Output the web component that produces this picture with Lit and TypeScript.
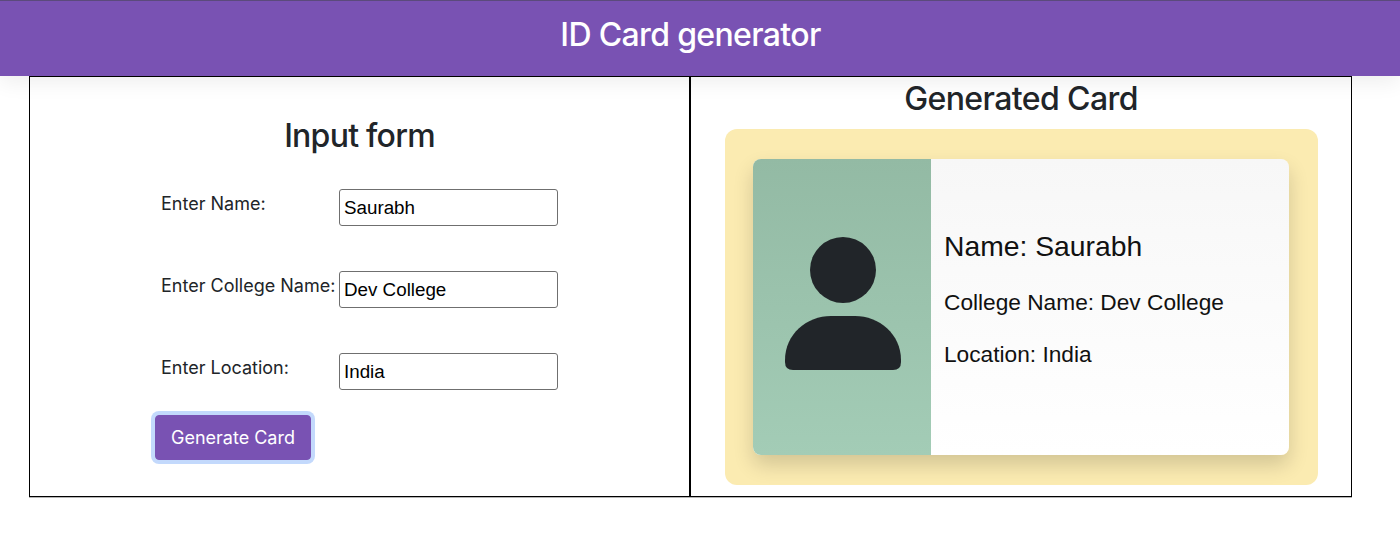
import { LitElement, html, css } from "lit";
import { customElement } from "lit/decorators.js";

@customElement("app-root")
export class AppRoot extends LitElement {
  static styles = css`
    :host { display: block; height: 551px; background: #fff; font-family: Inter, "Liberation Sans", sans-serif; color: #212529; overflow: hidden; }
    .head { position: relative; z-index: 2; height: 76px; box-sizing: border-box; background: #7952b3; border-top: 1px solid #5b4a7c; color: #fff; display: flex; justify-content: center; align-items: center; padding: 0 19px 9px 0; font-size: 32px; font-weight: 500; letter-spacing: -0.65px; box-shadow: 0 6px 20px rgba(0,0,0,.07); }
    .box { display: grid; grid-template-columns: 661px 662px; width: 1323px; height: 421px; margin-left: 29px; border-top: 1px solid #000; border-bottom: 1px solid #000; box-shadow: 0 1px 0 #b5b5b5; box-sizing: border-box; }
    .col { box-sizing: border-box; min-width: 0; }
    .col.left { border-left: 1px solid #000; border-right: 1px solid #000; }
    .col.right { border-left: 1px solid #000; border-right: 1px solid #000; padding-top: 2px; }
    h2 { margin: 0; font-size: 32px; font-weight: 500; letter-spacing: -0.75px; line-height: 38px; text-align: center; }
    .left h2 { margin-top: 40px; margin-bottom: 34px; }
    .right h2 { padding-top: 1px; margin-bottom: -1px; letter-spacing: -0.6px; }
    .form { margin-left: 131px; display: flex; flex-direction: column; gap: 45px; }
    .row { display: flex; height: 37px; font-size: 18px; }
    label { width: 178px; flex: none; line-height: 29px; white-space: nowrap; }
    input { width: 219px; height: 37px; box-sizing: border-box; margin: 0; border: 1px solid #6f6f6f; border-radius: 3px; padding: 0 4px; font: 18.8px "Liberation Sans", Arial, sans-serif; color: #000; background: #fff; }
    button { display: block; margin: 25px 0 0 125px; width: 156px; height: 45px; box-sizing: border-box; background: #7952b3; color: #fff; border: 1px solid #7952b3; border-radius: 4px; font: 18px Inter, "Liberation Sans", sans-serif; padding: 0; box-shadow: 0 0 0 4px #c3d9fc; }
    .yellow { margin: 12px 33px 0 34px; height: 356px; box-sizing: border-box; padding: 30px 29px 30px 28px; background: #fbebb1; border-radius: 12px; overflow: hidden; }
    .card { display: flex; height: 296px; border-radius: 8px; overflow: hidden; background: linear-gradient(#f7f7f7, #fff); }
    .shadow { border-radius: 8px; box-shadow: 0 10px 20px rgba(0,0,0,.16); }
    .photo { width: 178px; flex: none; background: linear-gradient(#93baa4, #a3ccb6); display: flex; align-items: center; justify-content: center; }
    .photo svg { display: block; width: 120px; height: 140px; margin: -3px 0 0 2px; }
    .info { flex: 1; padding: 0 0 0 13px; color: #000; font-family: "Liberation Sans", Arial, sans-serif; display: flex; flex-direction: column; }
    .name { font-size: 28.3px; line-height: 34px; margin-top: 70px; color: #111; }
    .meta { font-size: 22.7px; line-height: 28px; margin-top: 24px; color: #111; }
    .meta.c { margin-top: 25px; }
  `;

  render() {
    return html`
      <div class="head">ID Card generator</div>
      <div class="box">
        <div class="col left">
          <h2>Input form</h2>
          <div class="form">
            <div class="row"><label>Enter Name:</label><input value="Saurabh" /></div>
            <div class="row"><label>Enter College Name:</label><input value="Dev College" /></div>
            <div class="row"><label>Enter Location:</label><input value="India" /></div>
          </div>
          <button>Generate Card</button>
        </div>
        <div class="col right">
          <h2>Generated Card</h2>
          <div class="yellow">
            <div class="shadow">
              <div class="card">
                <div class="photo">
                  <svg viewBox="0 0 120 140" aria-hidden="true">
                    <circle cx="60" cy="34" r="33" fill="#212529" />
                    <path d="M2 124 C2 98 24 80 48 80 H72 C96 80 118 98 118 124 V126 Q118 134 110 134 H10 Q2 134 2 126 Z" fill="#212529" />
                  </svg>
                </div>
                <div class="info">
                  <div class="name">Name: Saurabh</div>
                  <div class="meta c">College Name: Dev College</div>
                  <div class="meta">Location: India</div>
                </div>
              </div>
            </div>
          </div>
        </div>
      </div>
    `;
  }
}
